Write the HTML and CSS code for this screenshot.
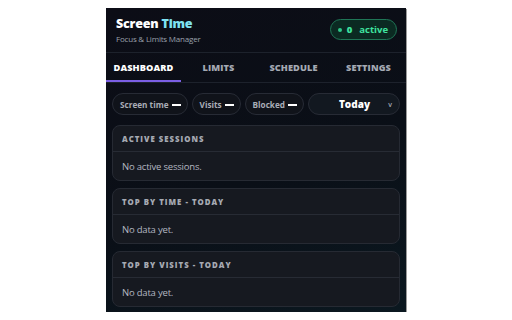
FILE: index.html
```html
<!DOCTYPE html>
<html lang="en">
<head>
  <meta charset="UTF-8" />
  <title>Screen Time</title>
  <link rel="stylesheet" href="styles.css">
</head>
<body>
  <div class="popup">
    <div class="header">
      <div class="brand">
        <div class="title">Screen <span class="accent">Time</span></div>
        <div class="subtitle">Focus &amp; Limits Manager</div>
      </div>
      <div class="badge"><span class="dot"></span><b>0</b> active</div>
    </div>

    <div class="tabs">
      <div class="tab active">Dashboard</div>
      <div class="tab">Limits</div>
      <div class="tab">Schedule</div>
      <div class="tab">Settings</div>
    </div>

    <div class="stats">
      <div class="chip">Screen time <span class="val"></span></div>
      <div class="chip">Visits <span class="val"></span></div>
      <div class="chip">Blocked <span class="val"></span></div>
      <div class="select">Today <span class="caret">v</span></div>
    </div>

    <div class="card">
      <div class="card-head">Active sessions</div>
      <div class="card-body">No active sessions.</div>
    </div>

    <div class="card">
      <div class="card-head">Top by time - Today</div>
      <div class="card-body">No data yet.</div>
    </div>

    <div class="card">
      <div class="card-head">Top by visits - Today</div>
      <div class="card-body">No data yet.</div>
    </div>
  </div>
</body>
</html>
```

FILE: styles.css
```css
body {
  margin: 0;
  background: #fff;
  font-family: "Open Sans", "Noto Sans", sans-serif;
}
.popup {
  margin: 8px 0 0 106px;
  width: 300px;
  height: 304px;
  box-sizing: border-box;
  background: linear-gradient(160deg, #0c0d16 0%, #0a0f17 55%, #0b1820 100%);
  box-shadow: 1px 1px 0 #9a9a9a;
  overflow: hidden;
  color: #c9ccd4;
}
.header {
  height: 45px;
  box-sizing: border-box;
  padding: 0 9px 0 10px;
  display: flex;
  align-items: center;
  justify-content: space-between;
  border-bottom: 1px solid #1d222c;
}
.title {
  font-size: 12.5px;
  font-weight: 800;
  color: #fff;
  line-height: 15px;
  letter-spacing: -0.2px;
}
.accent {
  color: #7fe3f2;
}
.subtitle {
  font-size: 8px;
  color: #9aa0ab;
  margin-top: 2px;
  letter-spacing: -0.2px;
}
.badge {
  display: flex;
  align-items: center;
  gap: 5px;
  height: 21px;
  box-sizing: border-box;
  padding: 0 8px 0 7px;
  border: 1px solid #1f7556;
  border-radius: 11px;
  background: #0b2a22;
  color: #3fe39f;
  font-size: 9.5px;
  font-weight: 700;
  margin-top: -1px;
}
.badge b {
  margin-right: 2px;
}
.dot {
  width: 4px;
  height: 4px;
  border-radius: 50%;
  background: #2fc98a;
}
.tabs {
  display: grid;
  grid-template-columns: repeat(4, 1fr);
  height: 29px;
  border-bottom: 1px solid #1d222c;
}
.tab {
  display: flex;
  align-items: center;
  justify-content: center;
  font-size: 9.2px;
  font-weight: 800;
  text-transform: uppercase;
  color: #a4a9b3;
  letter-spacing: 0.1px;
}
.tab.active {
  color: #fff;
  box-shadow: inset 0 -2px 0 #7b5fe4;
}
.stats {
  display: flex;
  gap: 4px;
  padding: 10px 6px 10px 6px;
}
.chip,
.select {
  height: 22px;
  box-sizing: border-box;
  display: flex;
  align-items: center;
  border: 1px solid #272b35;
  border-radius: 11px;
  background: #10131a;
  font-size: 8.2px;
  font-weight: 700;
  color: #a9adb7;
  padding: 0 6px 0 7px;
  gap: 3px;
}
.val {
  display: inline-block;
  width: 9px;
  height: 2px;
  background: #fff;
  margin-top: 1px;
}
.select {
  flex: 1;
  justify-content: center;
  position: relative;
  color: #fff;
  font-size: 10px;
  font-weight: 800;
  background: #121820;
}
.caret {
  position: absolute;
  right: 7px;
  font-size: 7px;
  color: #a0a6b0;
  font-weight: 600;
}
.card {
  margin: 0 6px 7px 6px;
  border: 1px solid #262a33;
  border-radius: 8px;
  background: #161920;
}
.card-head {
  height: 25px;
  display: flex;
  align-items: center;
  padding: 0 9px;
  border-bottom: 1px solid #272b34;
  font-size: 7.8px;
  font-weight: 800;
  letter-spacing: 1px;
  text-transform: uppercase;
  color: #a6aab3;
}
.card-body {
  height: 28px;
  display: flex;
  align-items: center;
  padding: 0 9px;
  font-size: 9.5px;
  color: #b3b7c0;
  letter-spacing: -0.2px;
}
```
